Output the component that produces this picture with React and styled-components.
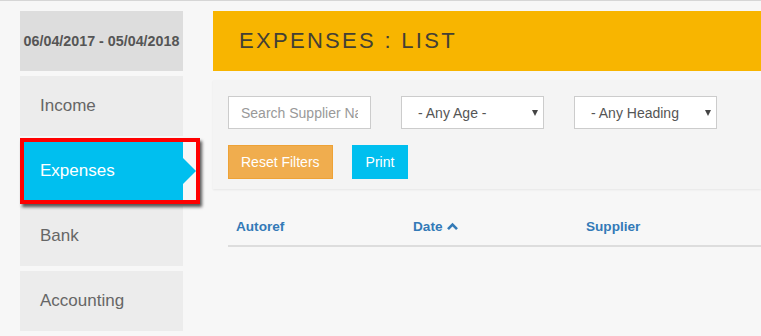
import styled, { createGlobalStyle } from "styled-components";

const GlobalStyle = createGlobalStyle`
  html, body {
    margin: 0;
    padding: 0;
    background: #f7f7f7;
    font-family: "Liberation Sans", Arial, sans-serif;
    overflow: hidden;
  }
`;

const Page = styled.div`
  width: 761px;
  height: 335px;
  border-top: 1px solid #d6d6d6;
  background: #f7f7f7;
  display: flex;
  gap: 30px;
  padding: 10px 0 0 20px;
  box-sizing: border-box;
  overflow: hidden;
`;

const Sidebar = styled.div`
  width: 163px;
  flex-shrink: 0;
  display: flex;
  flex-direction: column;
  gap: 5px;
  position: relative;
`;

const DateBox = styled.div`
  height: 60px;
  background: #dddddd;
  color: #555;
  font-size: 14.3px;
  font-weight: 700;
  display: flex;
  align-items: center;
  justify-content: center;
  white-space: nowrap;
`;

const NavItem = styled.div`
  height: 60px;
  background: ${(p) => (p.$active ? "#00bfef" : "#ececec")};
  color: ${(p) => (p.$active ? "#fff" : "#666")};
  font-size: 17px;
  display: flex;
  align-items: center;
  padding-left: 20px;
  position: relative;

  ${(p) =>
    p.$active &&
    `
    &::after {
      content: "";
      position: absolute;
      right: -13px;
      top: 50%;
      margin-top: -13px;
      border-top: 13px solid transparent;
      border-bottom: 13px solid transparent;
      border-left: 13px solid #00bfef;
    }
  `}
`;

const Highlight = styled.div`
  position: absolute;
  left: 0;
  top: 127px;
  width: 180px;
  height: 66px;
  border: 4px solid #ff0000;
  box-sizing: border-box;
  box-shadow: 2px 3px 3px rgba(0, 0, 0, 0.65);
  pointer-events: none;
`;

const Main = styled.div`
  width: 548px;
  flex-shrink: 0;
  display: flex;
  flex-direction: column;
`;

const Header = styled.div`
  height: 60px;
  background: #f8b500;
  display: flex;
  align-items: center;
  padding-left: 26px;
`;

const Title = styled.h1`
  margin: 0;
  font-size: 22px;
  font-weight: 400;
  letter-spacing: 2.3px;
  color: #433f35;
`;

const Panel = styled.div`
  margin-top: 9px;
  background: #f4f4f4;
  box-shadow: 0 1px 2px rgba(0, 0, 0, 0.07);
  padding: 16px 15px 10px;
  display: flex;
  flex-direction: column;
  gap: 16px;
`;

const Row = styled.div`
  display: flex;
  align-items: center;
  gap: ${(p) => p.$gap || 30}px;
`;

const Input = styled.input`
  width: 143px;
  height: 33px;
  box-sizing: border-box;
  border: 1px solid #cccccc;
  background: #fff;
  padding: 0 12px;
  font-family: inherit;
  font-size: 14px;
  color: #555;
  outline: none;

  &::placeholder {
    color: #999;
  }
`;

const SelectWrap = styled.div`
  position: relative;
  width: 143px;
  height: 33px;

  &::after {
    content: "";
    position: absolute;
    right: 6px;
    top: 14px;
    border-left: 3.5px solid transparent;
    border-right: 3.5px solid transparent;
    border-top: 6px solid #444;
    pointer-events: none;
  }
`;

const Select = styled.select`
  appearance: none;
  width: 100%;
  height: 100%;
  box-sizing: border-box;
  border: 1px solid #cccccc;
  border-radius: 0;
  background: #fff;
  padding: 0 34px 0 16px;
  font-family: inherit;
  font-size: 14px;
  color: #555;
  outline: none;
`;

const Button = styled.button`
  height: 34px;
  box-sizing: border-box;
  padding: 0 ${(p) => p.$pad || 12}px;
  border: 1px solid ${(p) => p.$border};
  background: ${(p) => p.$bg};
  color: #fff;
  font-family: inherit;
  font-size: 14px;
  cursor: pointer;
`;

const Table = styled.div`
  margin: 0 0 0 15px;
`;

const HeadRow = styled.div`
  display: grid;
  grid-template-columns: 177px 173px 1fr;
  padding: 30px 0 11px;
  border-bottom: 2px solid #dddddd;
`;

const HeadCell = styled.div`
  padding-left: 8px;
  color: #337ab7;
  font-size: 13.6px;
  font-weight: 700;
  display: flex;
  align-items: center;
  gap: 5px;
`;

const ChevronUp = () => (
  <svg width="11" height="9" viewBox="0 0 11 9">
    <path d="M1 7.2 L5.5 2.6 L10 7.2" fill="none" stroke="#337ab7" strokeWidth="2.6" />
  </svg>
);

const App = () => {
  return (
    <>
      <GlobalStyle />
      <Page>
        <Sidebar>
          <DateBox>06/04/2017 - 05/04/2018</DateBox>
          <NavItem>Income</NavItem>
          <NavItem $active>Expenses</NavItem>
          <NavItem>Bank</NavItem>
          <NavItem>Accounting</NavItem>
          <Highlight />
        </Sidebar>
        <Main>
          <Header>
            <Title>EXPENSES : LIST</Title>
          </Header>
          <Panel>
            <Row $gap={30}>
              <Input placeholder="Search Supplier Name" />
              <SelectWrap>
                <Select defaultValue="">
                  <option value="">- Any Age -</option>
                </Select>
              </SelectWrap>
              <SelectWrap>
                <Select defaultValue="">
                  <option value="">- Any Heading -</option>
                </Select>
              </SelectWrap>
            </Row>
            <Row $gap={19}>
              <Button $bg="#f0ad4e" $border="#eea236" $pad={12}>
                Reset Filters
              </Button>
              <Button $bg="#00bfef" $border="#00bfef" $pad={13}>
                Print
              </Button>
            </Row>
          </Panel>
          <Table>
            <HeadRow>
              <HeadCell>Autoref</HeadCell>
              <HeadCell>
                Date <ChevronUp />
              </HeadCell>
              <HeadCell>Supplier</HeadCell>
            </HeadRow>
          </Table>
        </Main>
      </Page>
    </>
  );
};

export default App;
